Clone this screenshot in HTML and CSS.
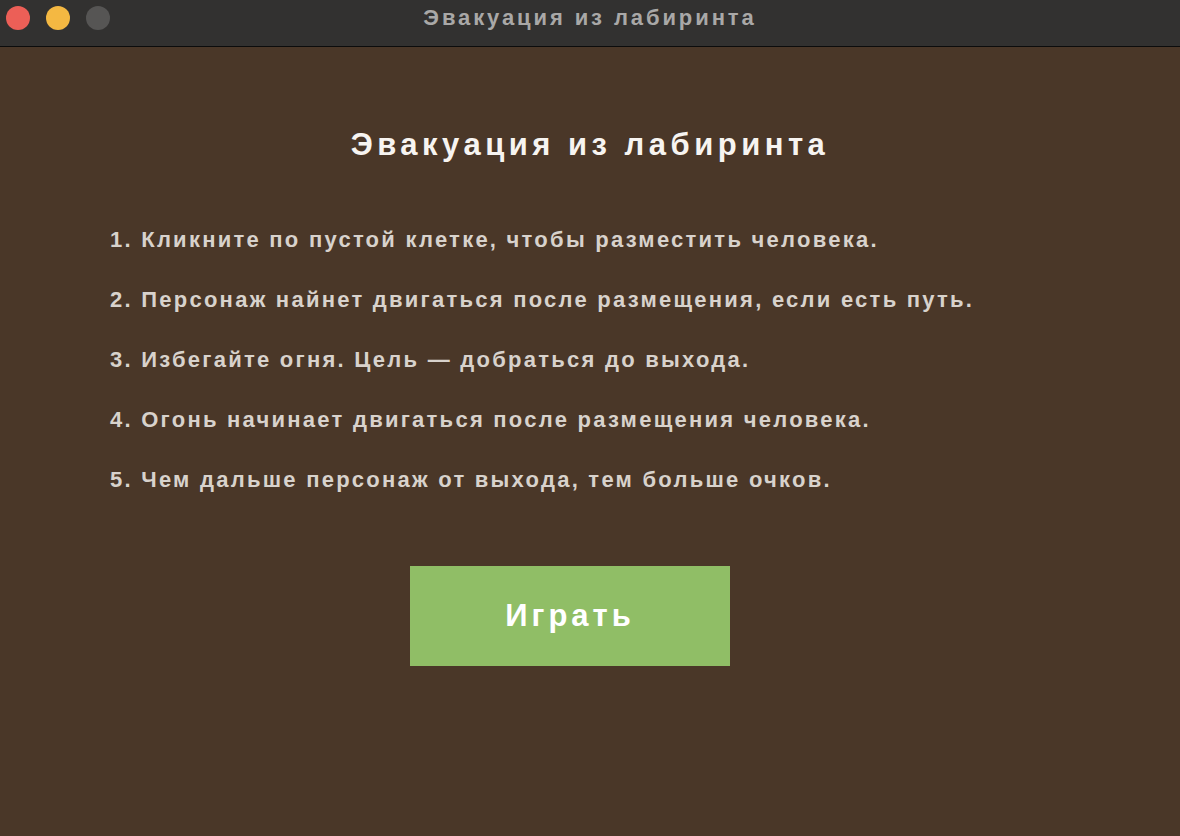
FILE: index.html
```html
<!DOCTYPE html>
<html lang="ru">
<head>
<meta charset="utf-8">
<link rel="stylesheet" href="styles.css">
</head>
<body>
<div class="window">
  <div class="titlebar">
    <div class="lights">
      <span class="light red"></span>
      <span class="light yellow"></span>
      <span class="light gray"></span>
    </div>
    <div class="wtitle">Эвакуация из лабиринта</div>
  </div>
  <div class="content">
    <h1 class="heading">Эвакуация из лабиринта</h1>
    <ol class="rules">
      <li>1. Кликните по пустой клетке, чтобы разместить человека.</li>
      <li>2. Персонаж найнет двигаться после размещения, если есть путь.</li>
      <li>3. Избегайте огня. Цель — добраться до выхода.</li>
      <li>4. Огонь начинает двигаться после размещения человека.</li>
      <li>5. Чем дальше персонаж от выхода, тем больше очков.</li>
    </ol>
    <div class="actions">
      <button class="play">Играть</button>
    </div>
  </div>
</div>
</body>
</html>
```
FILE: styles.css
```css
html, body {
  margin: 0;
  padding: 0;
  width: 1180px;
  height: 836px;
  overflow: hidden;
  font-family: "Liberation Sans", Arial, sans-serif;
}
.window {
  display: flex;
  flex-direction: column;
  height: 836px;
  background: #4a3728;
}
.titlebar {
  position: relative;
  height: 46px;
  background: #323130;
  border-bottom: 1px solid #0c0c0c;
  display: flex;
  align-items: center;
  justify-content: center;
}
.lights {
  position: absolute;
  left: 6px;
  top: 6px;
  display: flex;
  gap: 16px;
}
.light {
  width: 24px;
  height: 24px;
  border-radius: 50%;
}
.red { background: #ec5f57; }
.yellow { background: #f4b842; }
.gray { background: #565554; }
.wtitle {
  color: #a9a8a7;
  font-weight: bold;
  font-size: 22px;
  letter-spacing: 2.9px;
  margin-top: -10px;
}
.content {
  flex: 1;
  padding: 0 110px;
}
.heading {
  margin: 80px 0 0;
  text-align: center;
  color: #f7f4f1;
  font-size: 31px;
  letter-spacing: 4.5px;
  line-height: 36px;
  font-weight: bold;
}
.rules {
  list-style: none;
  margin: 66px 0 0;
  padding: 0;
  display: flex;
  flex-direction: column;
  gap: 38px;
}
.rules li {
  color: #d8d2cc;
  font-size: 22px;
  letter-spacing: 2.25px;
  line-height: 22px;
  font-weight: bold;
}
.actions {
  display: flex;
  justify-content: center;
  margin-top: 75px;
}
.play {
  width: 320px;
  height: 100px;
  border: none;
  background: #90be66;
  color: #ffffff;
  font-family: "Liberation Sans", Arial, sans-serif;
  font-weight: bold;
  font-size: 31px;
  letter-spacing: 4px;
  padding: 0;
  margin-left: -40px;
}
```
